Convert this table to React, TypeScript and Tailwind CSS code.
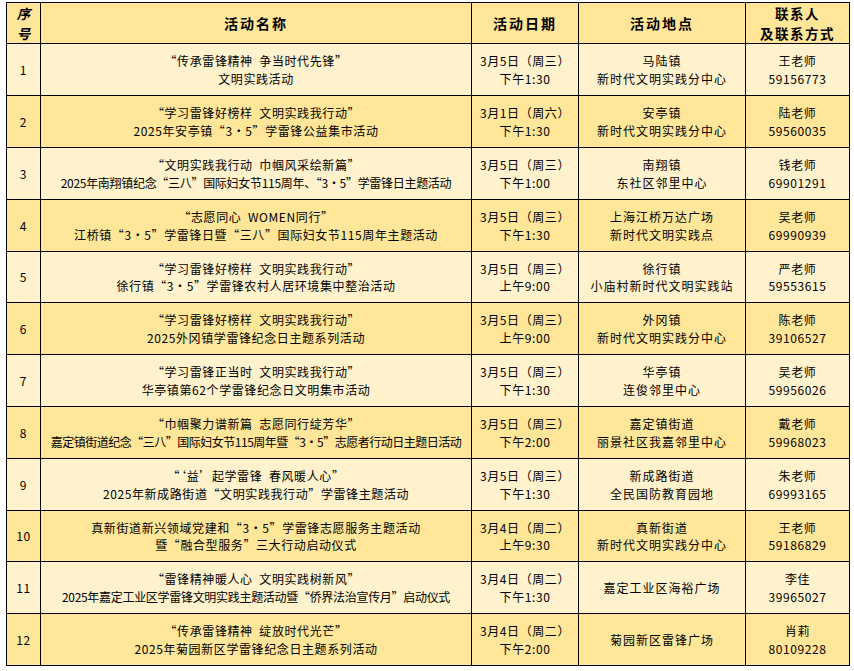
const rows = [
  {
    no: "1",
    name: ["“传承雷锋精神  争当时代先锋”", "文明实践活动"],
    date: ["3月5日（周三）", "下午1:30"],
    place: ["马陆镇", "新时代文明实践分中心"],
    contact: ["王老师", "59156773"],
    h: "h-[52px]",
  },
  {
    no: "2",
    name: ["“学习雷锋好榜样  文明实践我行动”", "2025年安亭镇“3·5”学雷锋公益集市活动"],
    date: ["3月1日（周六）", "下午1:30"],
    place: ["安亭镇", "新时代文明实践分中心"],
    contact: ["陆老师", "59560035"],
    h: "h-[52px]",
  },
  {
    no: "3",
    name: ["“文明实践我行动  巾帼风采绘新篇”", "2025年南翔镇纪念“三八”国际妇女节115周年、“3·5”学雷锋日主题活动"],
    date: ["3月5日（周三）", "下午1:00"],
    place: ["南翔镇", "东社区邻里中心"],
    contact: ["钱老师", "69901291"],
    h: "h-[52px]",
    tight: "text-[12px] tracking-[-0.3px]",
  },
  {
    no: "4",
    name: ["“志愿同心  WOMEN同行”", "江桥镇“3·5”学雷锋日暨“三八”国际妇女节115周年主题活动"],
    date: ["3月5日（周三）", "下午1:30"],
    place: ["上海江桥万达广场", "新时代文明实践点"],
    contact: ["吴老师", "69990939"],
    h: "h-[52px]",
  },
  {
    no: "5",
    name: ["“学习雷锋好榜样  文明实践我行动”", "徐行镇“3·5”学雷锋农村人居环境集中整治活动"],
    date: ["3月5日（周三）", "上午9:00"],
    place: ["徐行镇", "小庙村新时代文明实践站"],
    contact: ["严老师", "59553615"],
    h: "h-[51px]",
  },
  {
    no: "6",
    name: ["“学习雷锋好榜样  文明实践我行动”", "2025外冈镇学雷锋纪念日主题系列活动"],
    date: ["3月5日（周三）", "上午9:00"],
    place: ["外冈镇", "新时代文明实践分中心"],
    contact: ["陈老师", "39106527"],
    h: "h-[52px]",
  },
  {
    no: "7",
    name: ["“学习雷锋正当时  文明实践我行动”", "华亭镇第62个学雷锋纪念日文明集市活动"],
    date: ["3月5日（周三）", "下午1:30"],
    place: ["华亭镇", "连俊邻里中心"],
    contact: ["吴老师", "59956026"],
    h: "h-[52px]",
  },
  {
    no: "8",
    name: ["“巾帼聚力谱新篇  志愿同行绽芳华”", "嘉定镇街道纪念“三八”国际妇女节115周年暨“3•5”志愿者行动日主题日活动"],
    date: ["3月5日（周三）", "下午2:00"],
    place: ["嘉定镇街道", "丽景社区我嘉邻里中心"],
    contact: ["戴老师", "59968023"],
    h: "h-[52px]",
    tight: "text-[12px] tracking-[-0.5px]",
  },
  {
    no: "9",
    name: ["“‘益’起学雷锋  春风暖人心”", "2025年新成路街道“文明实践我行动”学雷锋主题活动"],
    date: ["3月5日（周三）", "下午1:30"],
    place: ["新成路街道", "全民国防教育园地"],
    contact: ["朱老师", "69993165"],
    h: "h-[52px]",
  },
  {
    no: "10",
    name: ["真新街道新兴领域党建和“3·5”学雷锋志愿服务主题活动", "暨“融合型服务”三大行动启动仪式"],
    date: ["3月4日（周二）", "上午9:30"],
    place: ["真新街道", "新时代文明实践分中心"],
    contact: ["王老师", "59186829"],
    h: "h-[51px]",
  },
  {
    no: "11",
    name: ["“雷锋精神暖人心  文明实践树新风”", "2025年嘉定工业区学雷锋文明实践主题活动暨“侨界法治宣传月”启动仪式"],
    date: ["3月4日（周二）", "下午1:30"],
    place: ["嘉定工业区海裕广场"],
    contact: ["李佳", "39965027"],
    h: "h-[52px]",
    tight: "text-[12px] tracking-[-0.3px]",
  },
  {
    no: "12",
    name: ["“传承雷锋精神  绽放时代光芒”", "2025年菊园新区学雷锋纪念日主题系列活动"],
    date: ["3月4日（周二）", "下午2:00"],
    place: ["菊园新区雷锋广场"],
    contact: ["肖莉", "80109228"],
    h: "h-[52px]",
  },
];

function Lines({ items, tight }: { items: string[]; tight?: string }) {
  return (
    <>
      {items.map((t, i) => (
        <div key={i} className={tight && i === 1 ? "whitespace-pre " + tight : "whitespace-pre"}>
          {t}
        </div>
      ))}
    </>
  );
}

export default function App() {
  const cell = "border border-black text-center align-middle p-0";
  const head = "border border-black text-center align-middle p-0 font-bold text-[14px] leading-[18px] tracking-[2px]";
  const head2 = "border border-black text-center align-middle p-0 font-bold text-[13.5px] leading-[20px]";

  return (
    <div className="min-h-screen bg-white pl-[6px] pt-[2px]">
      <table
        className="w-[843px] table-fixed border-collapse text-[12px] leading-[17.5px] tracking-[0.6px] text-black"
        style={{ fontFamily: '"Noto Sans CJK SC", "Noto Sans", sans-serif' }}
      >
        <colgroup>
          <col className="w-[34px]" />
          <col className="w-[431px]" />
          <col className="w-[107px]" />
          <col className="w-[167px]" />
          <col className="w-[104px]" />
        </colgroup>
        <thead>
          <tr className="h-[41px] bg-[#ffe699]">
            <th className={head2 + " italic tracking-normal"}>
              <div>序</div>
              <div>号</div>
            </th>
            <th className={head}>活动名称</th>
            <th className={head}>活动日期</th>
            <th className={head}>活动地点</th>
            <th className={head2 + " tracking-[1.5px]"}>
              <div>联系人</div>
              <div>及联系方式</div>
            </th>
          </tr>
        </thead>
        <tbody>
          {rows.map((r, i) => (
            <tr key={r.no} className={`${r.h} ${i % 2 === 0 ? "bg-[#fff2cc]" : "bg-[#ffe699]"}`}>
              <td className={cell}>{r.no}</td>
              <td className={cell}>
                <Lines items={r.name} tight={r.tight} />
              </td>
              <td className={cell}>
                <Lines items={r.date} />
              </td>
              <td className={cell + " tracking-[1px]"}>
                <Lines items={r.place} />
              </td>
              <td className={cell}>
                <Lines items={r.contact} />
              </td>
            </tr>
          ))}
        </tbody>
      </table>
    </div>
  );
}
